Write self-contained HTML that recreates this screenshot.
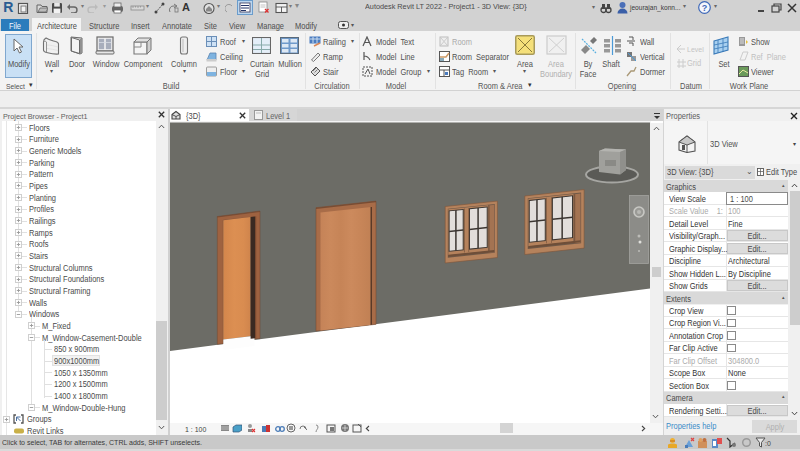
<!DOCTYPE html><html><head><meta charset="utf-8"><style>*{margin:0;padding:0;box-sizing:border-box}
html,body{width:800px;height:451px;overflow:hidden;background:#f0f0f0;position:relative;font-family:"Liberation Sans",sans-serif}
.t{position:absolute;white-space:nowrap;line-height:12px}
.b{position:absolute}
</style></head><body><div id="w" style="position:absolute;left:0;top:0;width:800px;height:451px;overflow:hidden">
<div class="b" style="left:0px;top:0px;width:800px;height:31px;background:#d2d2d2;"></div>
<div style="position:absolute;left:0;top:-1.5px;width:800px;height:18px">
<div class="t" style="left:3.2px;top:2.20px;font-size:14px;color:#2a5c92;font-weight:bold;">R</div>
<svg class="b" style="left:17px;top:3px;" width="12" height="12" viewBox="0 0 12 12"><rect x="1.5" y="1.5" width="9" height="10" fill="#f4f4f4" stroke="#555" stroke-width="1.2"/><rect x="4" y="4" width="5" height="6" fill="none" stroke="#777"/></svg>
<svg class="b" style="left:36px;top:4px;" width="12" height="10" viewBox="0 0 12 10"><path d="M1 2h4l1 1.5h5v6H1z" fill="#d9d9d9" stroke="#666"/><path d="M2 9l2-4h8l-2 4z" fill="#bbb" stroke="#666" stroke-width=".8"/></svg>
<svg class="b" style="left:51px;top:3px;" width="12" height="12" viewBox="0 0 12 12"><rect x="1" y="1" width="10" height="10" rx="1.2" fill="#4a4a4a"/><rect x="3.2" y="1" width="5.6" height="3.6" fill="#e8e8e8"/><rect x="2.6" y="6.6" width="6.8" height="4.4" fill="#f2f2f2"/></svg>
<svg class="b" style="left:66px;top:4px;" width="12" height="10" viewBox="0 0 12 10"><path d="M3 4h5a3 3 0 0 1 0 6H5" fill="none" stroke="#666" stroke-width="1.4"/><path d="M1 4l3-3v6z" fill="#666"/></svg>
<div class="t" style="left:81px;top:1.50px;font-size:6px;color:#777;">▾</div>
<svg class="b" style="left:87px;top:4px;" width="12" height="10" viewBox="0 0 12 10"><path d="M9 4H4a3 3 0 0 0 0 6h3" fill="none" stroke="#bbb" stroke-width="1.4"/><path d="M11 4L8 1v6z" fill="#bbb"/></svg>
<div class="t" style="left:103px;top:1.50px;font-size:6px;color:#999;">▾</div>
<svg class="b" style="left:111px;top:3px;" width="13" height="12" viewBox="0 0 13 12"><rect x="1" y="4" width="11" height="6" rx="2" fill="#666"/><rect x="3" y="1" width="7" height="4" fill="#eee" stroke="#666" stroke-width=".8"/><rect x="3" y="8" width="7" height="3" fill="#fff" stroke="#666" stroke-width=".8"/></svg>
<svg class="b" style="left:130px;top:4px;" width="16" height="10" viewBox="0 0 16 10"><rect x="1" y="3" width="13" height="4" fill="#d8d8d8" stroke="#8a8a8a" stroke-width=".8"/><path d="M3 3v2M5.5 3v1.5M8 3v2M10.5 3v1.5" stroke="#8a8a8a" stroke-width=".7"/></svg>
<div class="t" style="left:146px;top:1.50px;font-size:6px;color:#777;">▾</div>
<svg class="b" style="left:154px;top:3px;" width="11" height="12" viewBox="0 0 11 12"><path d="M2.5 9.5L8.5 2.5" stroke="#555" stroke-width="1" stroke-dasharray="1.5 .8"/><circle cx="2" cy="10" r="1.5" fill="#444"/><circle cx="9" cy="2" r="1.5" fill="#444"/></svg>
<svg class="b" style="left:168px;top:3px;" width="12" height="12" viewBox="0 0 12 12"><path d="M2 10a4 4 0 0 1 4-6h2M6 2l3 2-3 2" fill="none" stroke="#777" stroke-width="1"/><rect x="7" y="6" width="3" height="4" fill="none" stroke="#777" stroke-width=".8"/></svg>
<div class="t" style="left:182px;top:2.50px;font-size:11px;color:#333;font-weight:bold;">A</div>
<svg class="b" style="left:203px;top:3px;" width="12" height="12" viewBox="0 0 12 12"><circle cx="6" cy="6.5" r="5" fill="#e0e0e0" stroke="#555" stroke-width="1.1"/><path d="M3 7l3-3 3 3v2.5H3z" fill="#888"/></svg>
<div class="t" style="left:217px;top:1.50px;font-size:6px;color:#777;">▾</div>
<svg class="b" style="left:225px;top:3px;" width="9" height="12" viewBox="0 0 9 12"><path d="M2 10a4 4 0 1 1 5-6" fill="none" stroke="#999" stroke-width="1"/></svg>
<svg class="b" style="left:237px;top:1px;" width="16" height="15" viewBox="0 0 16 15"><rect x=".5" y=".5" width="15" height="14" fill="#bcd6ee" stroke="#6a9ccc"/><rect x="3" y="3" width="10" height="9" fill="#fff" stroke="#335" stroke-width=".8"/><path d="M4 5.5h8M4 8h8M4 10.5h5" stroke="#236" stroke-width="1"/></svg>
<svg class="b" style="left:258px;top:2px;" width="12" height="13" viewBox="0 0 12 13"><rect x="1" y="1" width="8" height="10" fill="#fff" stroke="#888" stroke-width=".8"/><path d="M2.5 4h5M2.5 6h5" stroke="#aaa" stroke-width=".7"/><path d="M7 8l3.5 3.5M10.5 8L7 11.5" stroke="#d33" stroke-width="1.3"/></svg>
<svg class="b" style="left:275px;top:3px;" width="13" height="12" viewBox="0 0 13 12"><rect x="1" y="1.5" width="11" height="9" fill="#f4f4f4" stroke="#555" stroke-width="1.1"/><path d="M1 5h11M6.5 5v5.5" stroke="#555" stroke-width=".9"/></svg>
<div class="t" style="left:289px;top:1.50px;font-size:6px;color:#777;">▾</div>
<div class="t" style="left:295px;top:1.50px;font-size:7.5px;color:#888;">▾</div>
</div>
<div class="t" style="left:365px;top:0.60px;font-size:7.96px;transform:scaleX(0.915);transform-origin:0 50%;color:#4a4a4a;">Autodesk Revit LT 2022 - Project1 - 3D View: {3D}</div>
<div style="position:absolute;left:0;top:-1px;width:800px;height:18px">
<div class="t" style="left:592px;top:1.50px;font-size:6px;color:#666;">▾</div>
<svg class="b" style="left:600px;top:3px;" width="12" height="12" viewBox="0 0 12 12"><circle cx="3.5" cy="8" r="2.5" fill="none" stroke="#444" stroke-width="1.3"/><circle cx="8.5" cy="8" r="2.5" fill="none" stroke="#444" stroke-width="1.3"/><rect x="2" y="2" width="3" height="5" fill="#444"/><rect x="7" y="2" width="3" height="5" fill="#444"/></svg>
<svg class="b" style="left:617px;top:2px;" width="11" height="13" viewBox="0 0 11 13"><circle cx="5.5" cy="4" r="3" fill="#4a6fb8"/><path d="M0.5 12.5a5 5 0 0 1 10 0z" fill="#3a5fa8"/></svg>
<div class="t" style="left:629.5px;top:3.30px;font-size:7.19px;transform:scaleX(0.915);transform-origin:0 50%;color:#3a3a3a;">jeourajan_konn...</div>
<div class="t" style="left:683px;top:1.00px;font-size:6px;color:#666;">▾</div>
<svg class="b" style="left:698px;top:2px;" width="13" height="13" viewBox="0 0 13 13"><circle cx="6.5" cy="6.5" r="5.8" fill="#f4f6fb" stroke="#3e68b8" stroke-width="1.2"/><text x="6.5" y="10" font-size="9" text-anchor="middle" fill="#3e68b8" font-family="Liberation Sans" font-weight="bold">?</text></svg>
<div class="t" style="left:714px;top:1.00px;font-size:6px;color:#666;">▾</div>
<div class="b" style="left:758px;top:11px;width:6px;height:1.5px;background:#444;"></div>
<svg class="b" style="left:771px;top:4px;" width="11" height="10" viewBox="0 0 11 10"><rect x="1" y="3" width="7" height="6" fill="none" stroke="#444" stroke-width="1.2"/><path d="M3 3V1h7v6H8" fill="none" stroke="#444" stroke-width="1.2"/></svg>
<svg class="b" style="left:787px;top:4px;" width="10" height="10" viewBox="0 0 10 10"><path d="M1 1l8 8M9 1l-8 8" stroke="#333" stroke-width="1.5"/></svg>
</div>
<div class="b" style="left:1px;top:18.5px;width:28px;height:12.5px;background:#2b7cbc;"></div>
<div class="t" style="left:-45px;width:120px;text-align:center;top:20.60px;font-size:8.18px;transform:scaleX(0.915);color:#f4f8fc;">File</div>
<div class="b" style="left:32px;top:17.5px;width:49px;height:13.5px;background:#f3f3f3;"></div>
<div class="t" style="left:37px;top:20.60px;font-size:8.18px;transform:scaleX(0.915);transform-origin:0 50%;color:#4a4a4a;">Architecture</div>
<div class="t" style="left:89px;top:20.60px;font-size:8.18px;transform:scaleX(0.915);transform-origin:0 50%;color:#4e4e4e;">Structure</div>
<div class="t" style="left:131px;top:20.60px;font-size:8.18px;transform:scaleX(0.915);transform-origin:0 50%;color:#4e4e4e;">Insert</div>
<div class="t" style="left:162px;top:20.60px;font-size:8.18px;transform:scaleX(0.915);transform-origin:0 50%;color:#4e4e4e;">Annotate</div>
<div class="t" style="left:204px;top:20.60px;font-size:8.18px;transform:scaleX(0.915);transform-origin:0 50%;color:#4e4e4e;">Site</div>
<div class="t" style="left:229px;top:20.60px;font-size:8.18px;transform:scaleX(0.915);transform-origin:0 50%;color:#4e4e4e;">View</div>
<div class="t" style="left:257px;top:20.60px;font-size:8.18px;transform:scaleX(0.915);transform-origin:0 50%;color:#4e4e4e;">Manage</div>
<div class="t" style="left:295px;top:20.60px;font-size:8.18px;transform:scaleX(0.915);transform-origin:0 50%;color:#4e4e4e;">Modify</div>
<svg class="b" style="left:338px;top:21px;" width="11" height="8" viewBox="0 0 11 8"><rect x=".5" y=".5" width="10" height="7" rx="2" fill="#eee" stroke="#555"/><circle cx="5.5" cy="4" r="1.5" fill="#333"/></svg>
<div class="t" style="left:351px;top:19.00px;font-size:6px;color:#555;">▾</div>
<div class="b" style="left:0px;top:31px;width:800px;height:59px;background:#f3f3f3;"></div>
<div class="b" style="left:0px;top:90px;width:800px;height:1px;background:#d2d2d2;"></div>
<div class="b" style="left:0px;top:91px;width:800px;height:16px;background:#efefef;"></div>
<div class="b" style="left:0px;top:107px;width:800px;height:1.5px;background:#d6d6d6;"></div>
<div class="b" style="left:36px;top:33px;width:1px;height:56px;background:#e2e2e2;"></div>
<div class="b" style="left:305px;top:33px;width:1px;height:56px;background:#e2e2e2;"></div>
<div class="b" style="left:359px;top:33px;width:1px;height:56px;background:#e2e2e2;"></div>
<div class="b" style="left:435px;top:33px;width:1px;height:56px;background:#e2e2e2;"></div>
<div class="b" style="left:575px;top:33px;width:1px;height:56px;background:#e2e2e2;"></div>
<div class="b" style="left:670px;top:33px;width:1px;height:56px;background:#e2e2e2;"></div>
<div class="b" style="left:709px;top:33px;width:1px;height:56px;background:#e2e2e2;"></div>
<div class="b" style="left:5px;top:34px;width:27px;height:44px;background:#c9e0f5;border:1px solid #7fa7cf;"></div>
<svg class="b" style="left:12px;top:38px;" width="12" height="16" viewBox="0 0 12 16"><path d="M2 1v12l3-3 2.5 5 2-1-2.5-5h4z" fill="#fff" stroke="#666" stroke-width="1"/></svg>
<div class="t" style="left:-41.5px;width:120px;text-align:center;top:58.80px;font-size:8.18px;transform:scaleX(0.915);color:#505050;">Modify</div>
<div class="t" style="left:5.5px;top:80.60px;font-size:7.41px;transform:scaleX(0.915);transform-origin:0 50%;color:#505050;">Select</div>
<div class="t" style="left:29px;top:79.00px;font-size:7px;color:#333;">▾</div>
<svg class="b" style="left:42px;top:36px;" width="19" height="19" viewBox="0 0 19 19"><path d="M4 2c-2 1-2.5 2-2.5 4v8c0 1.5 1 2 3 2.5 4 1 8 2 12 1.5V8c0-1.5-1-2-3-2.5C10 4.5 7 4 4 2z" fill="#f0f0f0" stroke="#707070" stroke-width="1.1"/><path d="M1.5 6c1-1 2-1 3 0v10.5" fill="none" stroke="#888" stroke-width=".9"/><path d="M5 9c4 0 7 1 11 2M5 12.5c4 .5 7 1 11 2" stroke="#ddd" stroke-width=".8" fill="none"/></svg>
<div class="t" style="left:-8.5px;width:120px;text-align:center;top:58.80px;font-size:8.18px;transform:scaleX(0.915);color:#505050;">Wall</div>
<div class="t" style="left:49.5px;top:65.00px;font-size:6px;color:#555;">▾</div>
<svg class="b" style="left:69px;top:35px;" width="15" height="20" viewBox="0 0 15 20"><path d="M2 2l11 1v15l-2 1-9-3z" fill="#d8d8d8" stroke="#6a6a6a" stroke-width="1"/><path d="M2.5 2.5l8 2.5v13.5l-8-2.5z" fill="#f4f4f4" stroke="#6a6a6a" stroke-width="1"/><path d="M11 4h2v14h-2z" fill="#909090"/></svg>
<div class="t" style="left:17px;width:120px;text-align:center;top:58.80px;font-size:8.18px;transform:scaleX(0.915);color:#505050;">Door</div>
<svg class="b" style="left:95px;top:36px;" width="20" height="19" viewBox="0 0 20 19"><rect x="2" y="1" width="16" height="14" fill="#f0f0f0" stroke="#6a6a6a" stroke-width="1.2"/><rect x="3.8" y="2.8" width="5.4" height="10.4" fill="#a8aebc"/><rect x="10.8" y="2.8" width="5.4" height="10.4" fill="#a8aebc"/><path d="M3.8 6.5h12.4" stroke="#d8dce4" stroke-width=".8"/><rect x="1" y="15" width="18" height="3" rx="1" fill="#e8e8e8" stroke="#6a6a6a" stroke-width="1"/></svg>
<div class="t" style="left:45.5px;width:120px;text-align:center;top:58.80px;font-size:8.18px;transform:scaleX(0.915);color:#505050;">Window</div>
<svg class="b" style="left:132px;top:36px;" width="21" height="19" viewBox="0 0 21 19"><path d="M2 6h13v12H2z" fill="#f4f4f4" stroke="#777" stroke-width="1.1"/><path d="M2 6l4-4h13l-4 4z" fill="#e0e0e0" stroke="#777" stroke-width="1"/><path d="M15 6l4-4v12l-4 4z" fill="#cfcfcf" stroke="#777" stroke-width="1"/><path d="M2 11h7V6" fill="none" stroke="#888"/></svg>
<div class="t" style="left:83px;width:120px;text-align:center;top:58.80px;font-size:8.18px;transform:scaleX(0.915);color:#505050;">Component</div>
<svg class="b" style="left:179px;top:36px;" width="10" height="19" viewBox="0 0 10 19"><rect x="1.5" y="1" width="7" height="17" rx="2" fill="#eee" stroke="#777" stroke-width="1.1"/><path d="M4 3v13" stroke="#bbb"/></svg>
<div class="t" style="left:124px;width:120px;text-align:center;top:58.80px;font-size:8.18px;transform:scaleX(0.915);color:#505050;">Column</div>
<div class="t" style="left:182.5px;top:65.00px;font-size:6px;color:#555;">▾</div>
<div class="t" style="left:111px;width:120px;text-align:center;top:80.80px;font-size:8.18px;transform:scaleX(0.915);color:#555;">Build</div>
<svg class="b" style="left:206px;top:36px;" width="11" height="11" viewBox="0 0 11 11"><rect x=".5" y=".5" width="10" height="10" fill="#cfe2f5" stroke="#6b8fb8"/><path d="M5.5 1v9M1 5.5h9" stroke="#6b8fb8"/></svg>
<div class="t" style="left:220px;top:37.10px;font-size:8.18px;transform:scaleX(0.915);transform-origin:0 50%;color:#505050;">Roof</div>
<div class="t" style="left:241.5px;top:35.00px;font-size:6px;color:#555;">▾</div>
<svg class="b" style="left:206px;top:51px;" width="11" height="11" viewBox="0 0 11 11"><path d="M1 9l3-7h6v7z" fill="#7eb3e0" stroke="#5a84b0" stroke-width=".8"/><rect x=".5" y="8" width="10" height="2.5" fill="#ccc"/></svg>
<div class="t" style="left:220px;top:51.90px;font-size:8.18px;transform:scaleX(0.915);transform-origin:0 50%;color:#505050;">Ceiling</div>
<svg class="b" style="left:206px;top:66px;" width="11" height="11" viewBox="0 0 11 11"><rect x=".5" y="1" width="10" height="9" rx="1" fill="#eee" stroke="#888" stroke-width=".8"/><path d="M1 6h9v4H1z" fill="#7eb3e0"/></svg>
<div class="t" style="left:220px;top:67.10px;font-size:8.18px;transform:scaleX(0.915);transform-origin:0 50%;color:#505050;">Floor</div>
<div class="t" style="left:241.5px;top:65.00px;font-size:6px;color:#555;">▾</div>
<svg class="b" style="left:252px;top:37px;" width="19" height="17" viewBox="0 0 19 17"><rect x=".5" y=".5" width="18" height="16" fill="#e4eef8" stroke="#666" stroke-width="1.1"/><path d="M9.5 1v15M1 8h17M1 12.5h17" stroke="#8aa"/></svg>
<div class="t" style="left:201.5px;width:120px;text-align:center;top:58.80px;font-size:8.18px;transform:scaleX(0.915);color:#505050;">Curtain</div>
<div class="t" style="left:201.5px;width:120px;text-align:center;top:68.80px;font-size:8.18px;transform:scaleX(0.915);color:#505050;">Grid</div>
<svg class="b" style="left:280px;top:37px;" width="19" height="17" viewBox="0 0 19 17"><rect x=".5" y=".5" width="18" height="16" fill="#6f9acb" stroke="#5a6a7a" stroke-width="1.1"/><rect x="2" y="2" width="6.5" height="3.5" fill="#dde8f4"/><rect x="10.5" y="2" width="6.5" height="3.5" fill="#dde8f4"/><rect x="2" y="7" width="6.5" height="3.5" fill="#dde8f4"/><rect x="10.5" y="7" width="6.5" height="3.5" fill="#dde8f4"/><rect x="2" y="12" width="6.5" height="3.5" fill="#dde8f4"/><rect x="10.5" y="12" width="6.5" height="3.5" fill="#dde8f4"/></svg>
<div class="t" style="left:230px;width:120px;text-align:center;top:58.80px;font-size:8.18px;transform:scaleX(0.915);color:#505050;">Mullion</div>
<svg class="b" style="left:309px;top:36px;" width="12" height="11" viewBox="0 0 12 11"><rect x=".5" y=".5" width="11" height="7" fill="#4a7cc0"/><path d="M1 3h10M4 1v6M8 1v6" stroke="#cde"/><path d="M5 10l6-3" stroke="#d85" stroke-width="1.5"/></svg>
<div class="t" style="left:323px;top:37.10px;font-size:8.18px;transform:scaleX(0.915);transform-origin:0 50%;color:#505050;">Railing</div>
<div class="t" style="left:351px;top:35.00px;font-size:6px;color:#555;">▾</div>
<svg class="b" style="left:310px;top:51px;" width="11" height="11" viewBox="0 0 11 11"><path d="M1.5 9L8 2l2 2-6.5 6.5z" fill="#eee" stroke="#777" stroke-width="1"/></svg>
<div class="t" style="left:323px;top:51.90px;font-size:8.18px;transform:scaleX(0.915);transform-origin:0 50%;color:#505050;">Ramp</div>
<svg class="b" style="left:310px;top:66px;" width="11" height="11" viewBox="0 0 11 11"><path d="M1 6l5-5 4 4-5 5z" fill="#ddd" stroke="#555" stroke-width="1"/><path d="M3 5l3-3M4.5 6.5l3-3" stroke="#555" stroke-width=".7"/></svg>
<div class="t" style="left:323px;top:67.10px;font-size:8.18px;transform:scaleX(0.915);transform-origin:0 50%;color:#505050;">Stair</div>
<div class="t" style="left:272px;width:120px;text-align:center;top:80.80px;font-size:8.18px;transform:scaleX(0.915);color:#555;">Circulation</div>
<svg class="b" style="left:362px;top:36px;" width="10" height="11" viewBox="0 0 10 11"><path d="M1 10L5 1l4 9M3 6.5h4" fill="none" stroke="#555" stroke-width="1.2"/></svg>
<div class="t" style="left:376px;top:37.10px;font-size:8.18px;transform:scaleX(0.915);transform-origin:0 50%;color:#505050;">Model&nbsp; Text</div>
<svg class="b" style="left:362px;top:51px;" width="10" height="11" viewBox="0 0 10 11"><path d="M2 1v8M2 5c3 0 5 2 6 4" fill="none" stroke="#555" stroke-width="1.2"/></svg>
<div class="t" style="left:376px;top:51.90px;font-size:8.18px;transform:scaleX(0.915);transform-origin:0 50%;color:#505050;">Model&nbsp; Line</div>
<svg class="b" style="left:362px;top:66px;" width="11" height="11" viewBox="0 0 11 11"><rect x="1" y="1" width="9" height="9" fill="none" stroke="#555" stroke-width="1" stroke-dasharray="2 1"/><path d="M3 8l3-5 2 5" fill="none" stroke="#555"/></svg>
<div class="t" style="left:376px;top:67.10px;font-size:8.18px;transform:scaleX(0.915);transform-origin:0 50%;color:#505050;">Model&nbsp; Group</div>
<div class="t" style="left:427px;top:65.00px;font-size:6px;color:#555;">▾</div>
<div class="t" style="left:336px;width:120px;text-align:center;top:80.80px;font-size:8.18px;transform:scaleX(0.915);color:#555;">Model</div>
<svg class="b" style="left:439px;top:36px;" width="10" height="11" viewBox="0 0 10 11"><rect x="1" y="1" width="8" height="9" fill="#eee" stroke="#bbb"/><path d="M2 2l6 7M8 2l-6 7" stroke="#ccc"/></svg>
<div class="t" style="left:452px;top:37.10px;font-size:8.18px;transform:scaleX(0.915);transform-origin:0 50%;color:#aaa;">Room</div>
<svg class="b" style="left:439px;top:51px;" width="11" height="11" viewBox="0 0 11 11"><rect x=".5" y=".5" width="10" height="10" fill="#fff" stroke="#555" stroke-width="1"/><path d="M1 6h6l3-4" stroke="#c96" stroke-width="1.5" fill="none"/><rect x="1" y="7" width="4" height="3" fill="#8ab"/></svg>
<div class="t" style="left:452px;top:51.90px;font-size:8.18px;transform:scaleX(0.915);transform-origin:0 50%;color:#505050;">Room&nbsp; Separator</div>
<svg class="b" style="left:439px;top:66px;" width="11" height="11" viewBox="0 0 11 11"><rect x=".5" y=".5" width="10" height="10" fill="#fff" stroke="#555" stroke-width="1"/><path d="M1 4h9M5 4v6" stroke="#555"/><rect x="6" y="6" width="3" height="3" fill="#4a7cc0"/></svg>
<div class="t" style="left:452px;top:67.10px;font-size:8.18px;transform:scaleX(0.915);transform-origin:0 50%;color:#505050;">Tag&nbsp; Room</div>
<div class="t" style="left:493px;top:65.00px;font-size:6px;color:#555;">▾</div>
<svg class="b" style="left:515px;top:35px;" width="20" height="20" viewBox="0 0 20 20"><rect x=".75" y=".75" width="18.5" height="18.5" rx="1.5" fill="#f5e07a" stroke="#a89a5a" stroke-width="1.5"/><path d="M3 3l14 14M17 3L3 17" stroke="#8a7a3a" stroke-width="1"/></svg>
<div class="t" style="left:465px;width:120px;text-align:center;top:59.30px;font-size:8.18px;transform:scaleX(0.915);color:#505050;">Area</div>
<div class="t" style="left:523px;top:64.50px;font-size:6px;color:#555;">▾</div>
<svg class="b" style="left:546px;top:35px;" width="21" height="20" viewBox="0 0 21 20"><rect x="1" y="1" width="19" height="18" fill="#f0f0f0" stroke="#ccc" stroke-width="1.2"/><path d="M3 3l15 14M18 3L3 17" stroke="#d0d0d0"/></svg>
<div class="t" style="left:496px;width:120px;text-align:center;top:59.30px;font-size:8.18px;transform:scaleX(0.915);color:#b0b0b0;">Area</div>
<div class="t" style="left:496px;width:120px;text-align:center;top:68.80px;font-size:8.18px;transform:scaleX(0.915);color:#b0b0b0;">Boundary</div>
<div class="t" style="left:478px;top:80.80px;font-size:8.18px;transform:scaleX(0.915);transform-origin:0 50%;color:#555;">Room &amp; Area</div>
<div class="t" style="left:528px;top:79.00px;font-size:7px;color:#333;">▾</div>
<svg class="b" style="left:579px;top:36px;" width="19" height="19" viewBox="0 0 19 19"><path d="M2 14l5-5 4 4-5 5z" fill="#888"/><path d="M11 5l4-4 3 3-4 4z" fill="#777"/><path d="M3 3l14 14" stroke="#5ab0e0" stroke-width="1.2" stroke-dasharray="2 1"/></svg>
<div class="t" style="left:528px;width:120px;text-align:center;top:59.30px;font-size:8.18px;transform:scaleX(0.915);color:#505050;">By</div>
<div class="t" style="left:528px;width:120px;text-align:center;top:68.80px;font-size:8.18px;transform:scaleX(0.915);color:#505050;">Face</div>
<svg class="b" style="left:603px;top:36px;" width="19" height="19" viewBox="0 0 19 19"><rect x="1" y="3" width="6" height="3.5" fill="#999"/><rect x="1" y="8" width="6" height="3.5" fill="#999"/><rect x="1" y="13" width="6" height="3.5" fill="#999"/><rect x="12" y="3" width="6" height="3.5" fill="#999"/><rect x="12" y="8" width="6" height="3.5" fill="#999"/><rect x="12" y="13" width="6" height="3.5" fill="#999"/><path d="M9.5 0v19" stroke="#4a9ad8" stroke-width="1.2"/></svg>
<div class="t" style="left:551px;width:120px;text-align:center;top:59.30px;font-size:8.18px;transform:scaleX(0.915);color:#505050;">Shaft</div>
<svg class="b" style="left:626px;top:36px;" width="10" height="11" viewBox="0 0 10 11"><path d="M1 5h8M3 1h4v3M3 7h4v3" fill="none" stroke="#555" stroke-width="1"/></svg>
<div class="t" style="left:640px;top:37.10px;font-size:8.18px;transform:scaleX(0.915);transform-origin:0 50%;color:#505050;">Wall</div>
<svg class="b" style="left:626px;top:51px;" width="11" height="11" viewBox="0 0 11 11"><rect x="1" y="1" width="5" height="5" fill="#777"/><rect x="5" y="5" width="5" height="5" fill="#999"/><path d="M2 2l8 8" stroke="#4a9ad8"/></svg>
<div class="t" style="left:640px;top:51.90px;font-size:8.18px;transform:scaleX(0.915);transform-origin:0 50%;color:#505050;">Vertical</div>
<svg class="b" style="left:626px;top:66px;" width="11" height="11" viewBox="0 0 11 11"><path d="M1 10l4-5h3l2-4" fill="none" stroke="#a97" stroke-width="1.3"/></svg>
<div class="t" style="left:640px;top:67.10px;font-size:8.18px;transform:scaleX(0.915);transform-origin:0 50%;color:#505050;">Dormer</div>
<div class="t" style="left:562px;width:120px;text-align:center;top:80.80px;font-size:8.18px;transform:scaleX(0.915);color:#555;">Opening</div>
<svg class="b" style="left:676px;top:44px;" width="10" height="9" viewBox="0 0 10 9"><path d="M1 5h8M5 1l-4 4 4 4" fill="none" stroke="#ccc"/></svg>
<div class="t" style="left:687px;top:44.30px;font-size:7.63px;transform:scaleX(0.915);transform-origin:0 50%;color:#c4c4c4;">Level</div>
<svg class="b" style="left:676px;top:58px;" width="10" height="10" viewBox="0 0 10 10"><path d="M3 1v9M7 1v9M1 4h9M1 8h9" stroke="#ccc"/></svg>
<div class="t" style="left:687px;top:58.30px;font-size:8.18px;transform:scaleX(0.915);transform-origin:0 50%;color:#c4c4c4;">Grid</div>
<div class="t" style="left:631px;width:120px;text-align:center;top:80.80px;font-size:8.18px;transform:scaleX(0.915);color:#555;">Datum</div>
<svg class="b" style="left:713px;top:36px;" width="19" height="19" viewBox="0 0 19 19"><path d="M1 5l14-4v13L1 18z" fill="#a8d0f0" stroke="#3a7ab8" stroke-width="1.1"/><path d="M5 4v13M10 3v13M1 9l14-3M1 13l14-3" stroke="#3a7ab8" stroke-width=".8"/></svg>
<div class="t" style="left:663.5px;width:120px;text-align:center;top:59.30px;font-size:8.18px;transform:scaleX(0.915);color:#505050;">Set</div>
<svg class="b" style="left:738px;top:36px;" width="11" height="11" viewBox="0 0 11 11"><rect x="1" y="1" width="6" height="9" fill="#999"/><path d="M2 3h4M2 5h4M2 7h4" stroke="#ddd"/><path d="M8 4l2 2-2 2" fill="#e8c040"/></svg>
<div class="t" style="left:751px;top:37.10px;font-size:8.18px;transform:scaleX(0.915);transform-origin:0 50%;color:#505050;">Show</div>
<svg class="b" style="left:738px;top:51px;" width="11" height="11" viewBox="0 0 11 11"><path d="M2 9l3-8h5l-3 8z" fill="none" stroke="#ccc"/></svg>
<div class="t" style="left:751px;top:51.90px;font-size:8.18px;transform:scaleX(0.915);transform-origin:0 50%;color:#c0c0c0;">Ref&nbsp; Plane</div>
<svg class="b" style="left:738px;top:66px;" width="11" height="11" viewBox="0 0 11 11"><rect x=".5" y=".5" width="10" height="10" fill="#6a9a5a" stroke="#555"/><path d="M1 8l4-4 5 3" stroke="#e8e8a0" fill="none"/></svg>
<div class="t" style="left:751px;top:67.10px;font-size:8.18px;transform:scaleX(0.915);transform-origin:0 50%;color:#505050;">Viewer</div>
<div class="t" style="left:689px;width:120px;text-align:center;top:80.80px;font-size:8.18px;transform:scaleX(0.915);color:#555;">Work Plane</div>
<div class="b" style="left:0px;top:108.5px;width:169px;height:12px;background:#f0f0f0;"></div>
<div class="t" style="left:2.5px;top:111.10px;font-size:7.96px;transform:scaleX(0.915);transform-origin:0 50%;color:#606060;">Project Browser - Project1</div>
<svg class="b" style="left:158px;top:111px;" width="7" height="7" viewBox="0 0 7 7"><path d="M.8 .8l5.4 5.4M6.2 .8L.8 6.2" stroke="#333" stroke-width="1.3"/></svg>
<div class="b" style="left:1.5px;top:120.5px;width:155px;height:314px;background:#fff;"></div>
<div class="b" style="left:156px;top:120.5px;width:12px;height:314px;background:#f0f0f0;"></div>
<div class="b" style="left:156px;top:320.5px;width:10.5px;height:99px;background:#cdcdcd;"></div>
<svg class="b" style="left:158px;top:124px;" width="7" height="5" viewBox="0 0 7 5"><path d="M.8 4L3.5 1.2 6.2 4" fill="none" stroke="#555" stroke-width="1"/></svg>
<svg class="b" style="left:158px;top:425px;" width="7" height="5" viewBox="0 0 7 5"><path d="M.8 1L3.5 3.8 6.2 1" fill="none" stroke="#555" stroke-width="1"/></svg>
<div class="b" style="left:168px;top:108.5px;width:1.5px;height:326px;background:#d0d0d0;"></div>
<div class="b" style="left:6px;top:120.5px;width:1px;height:314px;background:#e6e6e6;"></div>
<div class="b" style="left:18px;top:120.5px;width:1px;height:194px;background:#e0e0e0;"></div>
<div class="b" style="left:21px;top:127.4px;width:6px;height:1px;background:#e0e0e0;"></div>
<svg class="b" style="left:15px;top:123.9px;" width="7" height="7" viewBox="0 0 7 7"><rect x=".5" y=".5" width="6" height="6" fill="#fff" stroke="#cfcfcf" stroke-width="1"/><path d="M1.8 3.5h3.4" stroke="#999" stroke-width=".9"/><path d="M3.5 1.8v3.4" stroke="#999" stroke-width=".9"/></svg>
<div class="t" style="left:29px;top:122.70px;font-size:8.18px;transform:scaleX(0.915);transform-origin:0 50%;color:#4a4a4a;">Floors</div>
<div class="b" style="left:21px;top:139.065px;width:6px;height:1px;background:#e0e0e0;"></div>
<svg class="b" style="left:15px;top:135.565px;" width="7" height="7" viewBox="0 0 7 7"><rect x=".5" y=".5" width="6" height="6" fill="#fff" stroke="#cfcfcf" stroke-width="1"/><path d="M1.8 3.5h3.4" stroke="#999" stroke-width=".9"/><path d="M3.5 1.8v3.4" stroke="#999" stroke-width=".9"/></svg>
<div class="t" style="left:29px;top:134.37px;font-size:8.18px;transform:scaleX(0.915);transform-origin:0 50%;color:#4a4a4a;">Furniture</div>
<div class="b" style="left:21px;top:150.73000000000002px;width:6px;height:1px;background:#e0e0e0;"></div>
<svg class="b" style="left:15px;top:147.23000000000002px;" width="7" height="7" viewBox="0 0 7 7"><rect x=".5" y=".5" width="6" height="6" fill="#fff" stroke="#cfcfcf" stroke-width="1"/><path d="M1.8 3.5h3.4" stroke="#999" stroke-width=".9"/><path d="M3.5 1.8v3.4" stroke="#999" stroke-width=".9"/></svg>
<div class="t" style="left:29px;top:146.03px;font-size:8.18px;transform:scaleX(0.915);transform-origin:0 50%;color:#4a4a4a;">Generic Models</div>
<div class="b" style="left:21px;top:162.395px;width:6px;height:1px;background:#e0e0e0;"></div>
<svg class="b" style="left:15px;top:158.895px;" width="7" height="7" viewBox="0 0 7 7"><rect x=".5" y=".5" width="6" height="6" fill="#fff" stroke="#cfcfcf" stroke-width="1"/><path d="M1.8 3.5h3.4" stroke="#999" stroke-width=".9"/><path d="M3.5 1.8v3.4" stroke="#999" stroke-width=".9"/></svg>
<div class="t" style="left:29px;top:157.70px;font-size:8.18px;transform:scaleX(0.915);transform-origin:0 50%;color:#4a4a4a;">Parking</div>
<div class="b" style="left:21px;top:174.06px;width:6px;height:1px;background:#e0e0e0;"></div>
<svg class="b" style="left:15px;top:170.56px;" width="7" height="7" viewBox="0 0 7 7"><rect x=".5" y=".5" width="6" height="6" fill="#fff" stroke="#cfcfcf" stroke-width="1"/><path d="M1.8 3.5h3.4" stroke="#999" stroke-width=".9"/><path d="M3.5 1.8v3.4" stroke="#999" stroke-width=".9"/></svg>
<div class="t" style="left:29px;top:169.36px;font-size:8.18px;transform:scaleX(0.915);transform-origin:0 50%;color:#4a4a4a;">Pattern</div>
<div class="b" style="left:21px;top:185.725px;width:6px;height:1px;background:#e0e0e0;"></div>
<svg class="b" style="left:15px;top:182.225px;" width="7" height="7" viewBox="0 0 7 7"><rect x=".5" y=".5" width="6" height="6" fill="#fff" stroke="#cfcfcf" stroke-width="1"/><path d="M1.8 3.5h3.4" stroke="#999" stroke-width=".9"/><path d="M3.5 1.8v3.4" stroke="#999" stroke-width=".9"/></svg>
<div class="t" style="left:29px;top:181.03px;font-size:8.18px;transform:scaleX(0.915);transform-origin:0 50%;color:#4a4a4a;">Pipes</div>
<div class="b" style="left:21px;top:197.39px;width:6px;height:1px;background:#e0e0e0;"></div>
<svg class="b" style="left:15px;top:193.89px;" width="7" height="7" viewBox="0 0 7 7"><rect x=".5" y=".5" width="6" height="6" fill="#fff" stroke="#cfcfcf" stroke-width="1"/><path d="M1.8 3.5h3.4" stroke="#999" stroke-width=".9"/><path d="M3.5 1.8v3.4" stroke="#999" stroke-width=".9"/></svg>
<div class="t" style="left:29px;top:192.69px;font-size:8.18px;transform:scaleX(0.915);transform-origin:0 50%;color:#4a4a4a;">Planting</div>
<div class="b" style="left:21px;top:209.055px;width:6px;height:1px;background:#e0e0e0;"></div>
<svg class="b" style="left:15px;top:205.555px;" width="7" height="7" viewBox="0 0 7 7"><rect x=".5" y=".5" width="6" height="6" fill="#fff" stroke="#cfcfcf" stroke-width="1"/><path d="M1.8 3.5h3.4" stroke="#999" stroke-width=".9"/><path d="M3.5 1.8v3.4" stroke="#999" stroke-width=".9"/></svg>
<div class="t" style="left:29px;top:204.36px;font-size:8.18px;transform:scaleX(0.915);transform-origin:0 50%;color:#4a4a4a;">Profiles</div>
<div class="b" style="left:21px;top:220.72px;width:6px;height:1px;background:#e0e0e0;"></div>
<svg class="b" style="left:15px;top:217.22px;" width="7" height="7" viewBox="0 0 7 7"><rect x=".5" y=".5" width="6" height="6" fill="#fff" stroke="#cfcfcf" stroke-width="1"/><path d="M1.8 3.5h3.4" stroke="#999" stroke-width=".9"/><path d="M3.5 1.8v3.4" stroke="#999" stroke-width=".9"/></svg>
<div class="t" style="left:29px;top:216.02px;font-size:8.18px;transform:scaleX(0.915);transform-origin:0 50%;color:#4a4a4a;">Railings</div>
<div class="b" style="left:21px;top:232.385px;width:6px;height:1px;background:#e0e0e0;"></div>
<svg class="b" style="left:15px;top:228.885px;" width="7" height="7" viewBox="0 0 7 7"><rect x=".5" y=".5" width="6" height="6" fill="#fff" stroke="#cfcfcf" stroke-width="1"/><path d="M1.8 3.5h3.4" stroke="#999" stroke-width=".9"/><path d="M3.5 1.8v3.4" stroke="#999" stroke-width=".9"/></svg>
<div class="t" style="left:29px;top:227.69px;font-size:8.18px;transform:scaleX(0.915);transform-origin:0 50%;color:#4a4a4a;">Ramps</div>
<div class="b" style="left:21px;top:244.05px;width:6px;height:1px;background:#e0e0e0;"></div>
<svg class="b" style="left:15px;top:240.55px;" width="7" height="7" viewBox="0 0 7 7"><rect x=".5" y=".5" width="6" height="6" fill="#fff" stroke="#cfcfcf" stroke-width="1"/><path d="M1.8 3.5h3.4" stroke="#999" stroke-width=".9"/><path d="M3.5 1.8v3.4" stroke="#999" stroke-width=".9"/></svg>
<div class="t" style="left:29px;top:239.35px;font-size:8.18px;transform:scaleX(0.915);transform-origin:0 50%;color:#4a4a4a;">Roofs</div>
<div class="b" style="left:21px;top:255.715px;width:6px;height:1px;background:#e0e0e0;"></div>
<svg class="b" style="left:15px;top:252.215px;" width="7" height="7" viewBox="0 0 7 7"><rect x=".5" y=".5" width="6" height="6" fill="#fff" stroke="#cfcfcf" stroke-width="1"/><path d="M1.8 3.5h3.4" stroke="#999" stroke-width=".9"/><path d="M3.5 1.8v3.4" stroke="#999" stroke-width=".9"/></svg>
<div class="t" style="left:29px;top:251.02px;font-size:8.18px;transform:scaleX(0.915);transform-origin:0 50%;color:#4a4a4a;">Stairs</div>
<div class="b" style="left:21px;top:267.38px;width:6px;height:1px;background:#e0e0e0;"></div>
<svg class="b" style="left:15px;top:263.88px;" width="7" height="7" viewBox="0 0 7 7"><rect x=".5" y=".5" width="6" height="6" fill="#fff" stroke="#cfcfcf" stroke-width="1"/><path d="M1.8 3.5h3.4" stroke="#999" stroke-width=".9"/><path d="M3.5 1.8v3.4" stroke="#999" stroke-width=".9"/></svg>
<div class="t" style="left:29px;top:262.68px;font-size:8.18px;transform:scaleX(0.915);transform-origin:0 50%;color:#4a4a4a;">Structural Columns</div>
<div class="b" style="left:21px;top:279.04499999999996px;width:6px;height:1px;background:#e0e0e0;"></div>
<svg class="b" style="left:15px;top:275.54499999999996px;" width="7" height="7" viewBox="0 0 7 7"><rect x=".5" y=".5" width="6" height="6" fill="#fff" stroke="#cfcfcf" stroke-width="1"/><path d="M1.8 3.5h3.4" stroke="#999" stroke-width=".9"/><path d="M3.5 1.8v3.4" stroke="#999" stroke-width=".9"/></svg>
<div class="t" style="left:29px;top:274.34px;font-size:8.18px;transform:scaleX(0.915);transform-origin:0 50%;color:#4a4a4a;">Structural Foundations</div>
<div class="b" style="left:21px;top:290.71000000000004px;width:6px;height:1px;background:#e0e0e0;"></div>
<svg class="b" style="left:15px;top:287.21000000000004px;" width="7" height="7" viewBox="0 0 7 7"><rect x=".5" y=".5" width="6" height="6" fill="#fff" stroke="#cfcfcf" stroke-width="1"/><path d="M1.8 3.5h3.4" stroke="#999" stroke-width=".9"/><path d="M3.5 1.8v3.4" stroke="#999" stroke-width=".9"/></svg>
<div class="t" style="left:29px;top:286.01px;font-size:8.18px;transform:scaleX(0.915);transform-origin:0 50%;color:#4a4a4a;">Structural Framing</div>
<div class="b" style="left:21px;top:302.375px;width:6px;height:1px;background:#e0e0e0;"></div>
<svg class="b" style="left:15px;top:298.875px;" width="7" height="7" viewBox="0 0 7 7"><rect x=".5" y=".5" width="6" height="6" fill="#fff" stroke="#cfcfcf" stroke-width="1"/><path d="M1.8 3.5h3.4" stroke="#999" stroke-width=".9"/><path d="M3.5 1.8v3.4" stroke="#999" stroke-width=".9"/></svg>
<div class="t" style="left:29px;top:297.68px;font-size:8.18px;transform:scaleX(0.915);transform-origin:0 50%;color:#4a4a4a;">Walls</div>
<div class="b" style="left:21px;top:314.03999999999996px;width:6px;height:1px;background:#e0e0e0;"></div>
<svg class="b" style="left:15px;top:310.53999999999996px;" width="7" height="7" viewBox="0 0 7 7"><rect x=".5" y=".5" width="6" height="6" fill="#fff" stroke="#cfcfcf" stroke-width="1"/><path d="M1.8 3.5h3.4" stroke="#999" stroke-width=".9"/></svg>
<div class="t" style="left:29px;top:309.34px;font-size:8.18px;transform:scaleX(0.915);transform-origin:0 50%;color:#4a4a4a;">Windows</div>
<div class="b" style="left:31px;top:317.03999999999996px;width:1px;height:93px;background:#e0e0e0;"></div>
<div class="b" style="left:34px;top:325.705px;width:6px;height:1px;background:#e0e0e0;"></div>
<svg class="b" style="left:28px;top:322.205px;" width="7" height="7" viewBox="0 0 7 7"><rect x=".5" y=".5" width="6" height="6" fill="#fff" stroke="#cfcfcf" stroke-width="1"/><path d="M1.8 3.5h3.4" stroke="#999" stroke-width=".9"/><path d="M3.5 1.8v3.4" stroke="#999" stroke-width=".9"/></svg>
<div class="t" style="left:41.5px;top:321.00px;font-size:8.18px;transform:scaleX(0.915);transform-origin:0 50%;color:#4a4a4a;">M_Fixed</div>
<div class="b" style="left:34px;top:337.37px;width:6px;height:1px;background:#e0e0e0;"></div>
<svg class="b" style="left:28px;top:333.87px;" width="7" height="7" viewBox="0 0 7 7"><rect x=".5" y=".5" width="6" height="6" fill="#fff" stroke="#cfcfcf" stroke-width="1"/><path d="M1.8 3.5h3.4" stroke="#999" stroke-width=".9"/></svg>
<div class="t" style="left:41.5px;top:332.67px;font-size:8.18px;transform:scaleX(0.915);transform-origin:0 50%;color:#4a4a4a;">M_Window-Casement-Double</div>
<div class="b" style="left:44px;top:340.37px;width:1px;height:58px;background:#e0e0e0;"></div>
<div class="b" style="left:44px;top:349.03499999999997px;width:8px;height:1px;background:#e0e0e0;"></div>
<div class="t" style="left:53.5px;top:344.33px;font-size:8.18px;transform:scaleX(0.915);transform-origin:0 50%;color:#4a4a4a;">850 x 900mm</div>
<div class="b" style="left:44px;top:360.7px;width:8px;height:1px;background:#e0e0e0;"></div>
<div class="b" style="left:52px;top:355.2px;width:48px;height:11px;background:#f2f2f2;border:1px solid #e2e2e2;"></div>
<div class="t" style="left:53.5px;top:356.00px;font-size:8.18px;transform:scaleX(0.915);transform-origin:0 50%;color:#4a4a4a;">900x1000mm</div>
<div class="b" style="left:44px;top:372.365px;width:8px;height:1px;background:#e0e0e0;"></div>
<div class="t" style="left:53.5px;top:367.67px;font-size:8.18px;transform:scaleX(0.915);transform-origin:0 50%;color:#4a4a4a;">1050 x 1350mm</div>
<div class="b" style="left:44px;top:384.03px;width:8px;height:1px;background:#e0e0e0;"></div>
<div class="t" style="left:53.5px;top:379.33px;font-size:8.18px;transform:scaleX(0.915);transform-origin:0 50%;color:#4a4a4a;">1200 x 1500mm</div>
<div class="b" style="left:44px;top:395.69499999999994px;width:8px;height:1px;background:#e0e0e0;"></div>
<div class="t" style="left:53.5px;top:390.99px;font-size:8.18px;transform:scaleX(0.915);transform-origin:0 50%;color:#4a4a4a;">1400 x 1800mm</div>
<div class="b" style="left:34px;top:407.36px;width:6px;height:1px;background:#e0e0e0;"></div>
<svg class="b" style="left:28px;top:403.86px;" width="7" height="7" viewBox="0 0 7 7"><rect x=".5" y=".5" width="6" height="6" fill="#fff" stroke="#cfcfcf" stroke-width="1"/><path d="M1.8 3.5h3.4" stroke="#999" stroke-width=".9"/></svg>
<div class="t" style="left:41.5px;top:402.66px;font-size:8.18px;transform:scaleX(0.915);transform-origin:0 50%;color:#4a4a4a;">M_Window-Double-Hung</div>
<svg class="b" style="left:3px;top:415.525px;" width="7" height="7" viewBox="0 0 7 7"><rect x=".5" y=".5" width="6" height="6" fill="#fff" stroke="#cfcfcf" stroke-width="1"/><path d="M1.8 3.5h3.4" stroke="#999" stroke-width=".9"/><path d="M3.5 1.8v3.4" stroke="#999" stroke-width=".9"/></svg>
<svg class="b" style="left:13px;top:414.025px;" width="11" height="10" viewBox="0 0 11 10"><path d="M3 1H1v8h2M8 1h2v8H8" fill="none" stroke="#555" stroke-width="1.3"/><path d="M3.5 3l4 4M3.5 7V3h4" fill="none" stroke="#4a6fa0" stroke-width="1"/></svg>
<div class="t" style="left:26.5px;top:414.32px;font-size:8.18px;transform:scaleX(0.915);transform-origin:0 50%;color:#4a4a4a;">Groups</div>
<svg class="b" style="left:13px;top:426.68999999999994px;" width="12" height="8" viewBox="0 0 12 8"><rect x="1" y="1.5" width="10" height="5" rx="2" fill="#c9b048"/></svg>
<div class="t" style="left:26.5px;top:425.99px;font-size:8.18px;transform:scaleX(0.915);transform-origin:0 50%;color:#4a4a4a;">Revit Links</div>
<div class="b" style="left:0px;top:434.8px;width:800px;height:16.2px;background:#c9c9c9;"></div>
<div class="b" style="left:0px;top:448.5px;width:800px;height:2.5px;background:#dadada;"></div>
<div class="t" style="left:2px;top:436.80px;font-size:7.68px;transform:scaleX(0.915);transform-origin:0 50%;color:#3a3a3a;">Click to select, TAB for alternates, CTRL adds, SHIFT unselects.</div>
<div class="b" style="left:169.5px;top:108.5px;width:494px;height:326px;background:#ffffff;"></div>
<div class="b" style="left:169.5px;top:108.5px;width:494px;height:12.5px;background:#d2d2d2;"></div>
<div class="b" style="left:169.5px;top:108.5px;width:79px;height:14px;background:#ffffff;"></div>
<svg class="b" style="left:171px;top:110px;" width="10" height="10" viewBox="0 0 10 10"><path d="M1 4.5L5 1.5l4 3V9H1z" fill="#ddd" stroke="#444" stroke-width="1.1"/><path d="M1 4.5L5 6.5l4-2M5 6.5V9" fill="none" stroke="#444" stroke-width=".9"/></svg>
<div class="t" style="left:185.5px;top:110.80px;font-size:8.18px;transform:scaleX(0.915);transform-origin:0 50%;color:#4a4a4a;">{3D}</div>
<svg class="b" style="left:239px;top:112px;" width="7" height="7" viewBox="0 0 7 7"><path d="M.8 .8l5.4 5.4M6.2 .8L.8 6.2" stroke="#333" stroke-width="1.3"/></svg>
<div class="b" style="left:248.5px;top:108.5px;width:48px;height:12.5px;background:#d6d6d6;"></div>
<svg class="b" style="left:254px;top:110px;" width="9" height="10" viewBox="0 0 9 10"><rect x=".5" y=".5" width="8" height="9" fill="#f2f2f2" stroke="#999"/><path d="M2 3h5" stroke="#bbb"/></svg>
<div class="t" style="left:266px;top:110.80px;font-size:8.18px;transform:scaleX(0.915);transform-origin:0 50%;color:#666;">Level 1</div>
<svg class="b" style="left:653px;top:111.5px;" width="8" height="8" viewBox="0 0 8 8"><path d="M1 1.5h6" stroke="#333" stroke-width="1"/><path d="M1 4h6L4 7z" fill="#333"/></svg>
<div class="b" style="left:169.5px;top:121px;width:481px;height:1.5px;background:#f4f4f4;"></div>
<div class="b" style="left:650px;top:122.5px;width:13px;height:300px;background:#f0f0f0;"></div>
<div class="b" style="left:651.5px;top:267px;width:9px;height:10px;background:#cdcdcd;"></div>
<svg class="b" style="left:653px;top:126px;" width="7" height="5" viewBox="0 0 7 5"><path d="M.8 4L3.5 1.2 6.2 4" fill="none" stroke="#555" stroke-width="1"/></svg>
<svg class="b" style="left:652px;top:414px;" width="7" height="5" viewBox="0 0 7 5"><path d="M.8 1L3.5 3.8 6.2 1" fill="none" stroke="#555" stroke-width="1"/></svg>
<div class="b" style="left:169.5px;top:422.5px;width:494px;height:12px;background:#f6f6f6;"></div>
<div class="t" style="left:185px;top:423.60px;font-size:7.63px;transform:scaleX(0.915);transform-origin:0 50%;color:#444;">1 : 100</div>
<svg class="b" style="left:220px;top:423px;" width="10" height="10" viewBox="0 0 10 10"><rect x="1" y="2" width="8" height="6" fill="#888"/><path d="M1 4h8M1 6h8" stroke="#ddd" stroke-width=".6"/></svg>
<svg class="b" style="left:232px;top:423px;" width="10" height="10" viewBox="0 0 10 10"><path d="M1 4l3-2h6v5l-3 2H1z" fill="#4aa0c8" stroke="#357" stroke-width=".7"/></svg>
<svg class="b" style="left:246px;top:423px;" width="10" height="10" viewBox="0 0 10 10"><circle cx="4" cy="3" r="2" fill="#999"/><path d="M2 9V6h4v3" fill="#888"/><path d="M6 6l3 3M9 6L6 9" stroke="#d33" stroke-width="1.1"/></svg>
<svg class="b" style="left:261px;top:423px;" width="10" height="10" viewBox="0 0 10 10"><rect x="1" y="3" width="5" height="6" fill="#4a7cb8"/><rect x="5" y="2" width="4" height="7" fill="#c33"/></svg>
<svg class="b" style="left:275px;top:423px;" width="10" height="10" viewBox="0 0 10 10"><circle cx="3" cy="6" r="2.3" fill="none" stroke="#4a7cb8" stroke-width="1.3"/><circle cx="7" cy="6" r="2.3" fill="none" stroke="#4a7cb8" stroke-width="1.3"/></svg>
<svg class="b" style="left:286px;top:423px;" width="10" height="10" viewBox="0 0 10 10"><circle cx="5" cy="5" r="4" fill="none" stroke="#666" stroke-width="1"/><rect x="3" y="3" width="4" height="4" fill="#999"/></svg>
<svg class="b" style="left:299px;top:423px;" width="10" height="10" viewBox="0 0 10 10"><path d="M1 6a3 3 0 0 1 6 0M5 4l3 3" fill="none" stroke="#777" stroke-width="1"/></svg>
<svg class="b" style="left:312px;top:423px;" width="10" height="10" viewBox="0 0 10 10"><path d="M4 2a2 2 0 0 1 2 2c0 2-2 3-2 5" fill="none" stroke="#888" stroke-width="1"/></svg>
<svg class="b" style="left:326px;top:423px;" width="10" height="10" viewBox="0 0 10 10"><rect x="1" y="2" width="8" height="7" fill="none" stroke="#555" stroke-width="1"/><rect x="4" y="4" width="4" height="4" fill="#777"/></svg>
<svg class="b" style="left:340px;top:423px;" width="10" height="10" viewBox="0 0 10 10"><circle cx="5" cy="5" r="4" fill="#777"/><path d="M2 5h6M5 2v6" stroke="#ddd" stroke-width=".8"/></svg>
<svg class="b" style="left:352px;top:423px;" width="10" height="10" viewBox="0 0 10 10"><rect x="1" y="2" width="8" height="7" fill="none" stroke="#555" stroke-width="1"/><path d="M6 1l3 3" stroke="#555"/></svg>
<svg class="b" style="left:365px;top:425px;" width="5" height="7" viewBox="0 0 5 7"><path d="M4 1L1.3 3.5 4 6" fill="none" stroke="#444" stroke-width="1.1"/></svg>
<div class="b" style="left:500px;top:423px;width:13px;height:10px;background:#d4d4d4;"></div>
<svg class="b" style="left:641px;top:425px;" width="5" height="7" viewBox="0 0 5 7"><path d="M1 1l2.7 2.5L1 6" fill="none" stroke="#444" stroke-width="1.1"/></svg>
<svg class="b" style="left:0;top:0" width="800" height="451" viewBox="0 0 800 451"><defs><linearGradient id="dg1" x1="0" x2="1" y1="0" y2="0"><stop offset="0" stop-color="#d3864c"/><stop offset=".4" stop-color="#dc8f52"/><stop offset=".75" stop-color="#d98c50"/><stop offset="1" stop-color="#cf844c"/></linearGradient><linearGradient id="dg2" x1="0" x2="1" y1="0" y2="0"><stop offset="0" stop-color="#c58358"/><stop offset=".2" stop-color="#cb895c"/><stop offset=".4" stop-color="#c68457"/><stop offset=".6" stop-color="#cc8a5d"/><stop offset=".8" stop-color="#c78558"/><stop offset="1" stop-color="#c08054"/></linearGradient></defs><polygon points="170,122.5 650,122.5 650,288.5 170,351" fill="#6c6c66"/><polygon points="217.3,216.5 260,211 260,338.6 254.5,338.9 254.5,217 223.3,220.3 223.3,343.7 217.3,344.3" fill="#9e6240" stroke="#6e4630" stroke-width=".5"/><polygon points="223.3,220.3 250.6,216.9 250.6,336.2 223.3,339.6" fill="url(#dg1)"/><polygon points="223.3,339.6 250.6,336.2 254.5,338.3 254.5,346 223.3,350" fill="#fdfdfd"/><polygon points="250.6,216.9 255,216.4 255,338.3 250.6,338.7" fill="#3a2a22"/><polygon points="255,216.4 256.2,216.2 256.2,338.2 255,338.3" fill="#7a4a30"/><polygon points="217.3,216.5 260,211 260,212 217.3,217.5" fill="#6e4630" opacity=".7"/><polygon points="316,207.7 376,201.1 376,324.3 316,331" fill="#a86c48" stroke="#7a4e34" stroke-width=".6"/><polygon points="320.5,212.6 371.5,207 371.5,324.8 320.5,330.5" fill="url(#dg2)"/><polygon points="370.5,207.1 372,207 372,324.8 370.5,325" fill="#5a3a28"/><polygon points="316,207.7 376,201.1 376,202.3 316,208.9" fill="#6e4630" opacity=".8"/><g transform="translate(445.2,206.5) matrix(1,-0.104,0,1,0,0)"><rect x="0" y="0" width="52.2" height="56.5" fill="#b5825c" stroke="#80553a" stroke-width=".6"/><rect x="2.6100000000000003" y="2.5425" width="46.980000000000004" height="48.8725" fill="#6e5848"/><rect x="43.326" y="3.3899999999999997" width="5.742" height="47.46" fill="#a37352"/><rect x="43.326" y="3.3899999999999997" width="1.044" height="47.46" fill="#7a563e"/><rect x="3.132" y="3.1075" width="39.672000000000004" height="46.0475" fill="#b5825c"/><rect x="3.915" y="4.8025" width="14.094" height="40.3975" fill="#e2dedb" stroke="#3b3531" stroke-width="1"/><rect x="9.951" y="4.8025" width="1.5" height="40.3975" fill="#3b3531"/><rect x="3.915" y="24.675" width="14.094" height="1.5" fill="#3b3531"/><rect x="24.273000000000003" y="4.8025" width="17.748" height="40.3975" fill="#e2dedb" stroke="#3b3531" stroke-width="1"/><rect x="32.136" y="4.8025" width="1.5" height="40.3975" fill="#3b3531"/><rect x="24.273000000000003" y="24.675" width="17.748" height="1.5" fill="#3b3531"/><rect x="18.792" y="3.9550000000000005" width=".7" height="44.07" fill="#7a563e"/><rect x="23.229000000000003" y="3.9550000000000005" width=".7" height="44.07" fill="#7a563e"/><rect x="3.132" y="48.589999999999996" width="45.936" height="1.9775000000000003" fill="#6e4e38"/></g><g transform="translate(524.8,196) matrix(1,-0.108,0,1,0,0)"><rect x="0" y="0" width="59.3" height="58.5" fill="#b5825c" stroke="#80553a" stroke-width=".6"/><rect x="2.965" y="2.6325" width="53.37" height="50.6025" fill="#6e5848"/><rect x="49.218999999999994" y="3.51" width="6.523" height="49.14" fill="#a37352"/><rect x="49.218999999999994" y="3.51" width="1.186" height="49.14" fill="#7a563e"/><rect x="3.558" y="3.2175" width="45.068" height="47.677499999999995" fill="#b5825c"/><rect x="4.4475" y="4.9725" width="16.010999999999996" height="41.8275" fill="#e2dedb" stroke="#3b3531" stroke-width="1"/><rect x="11.4065" y="4.9725" width="1.5" height="41.8275" fill="#3b3531"/><rect x="4.4475" y="25.575" width="16.010999999999996" height="1.5" fill="#3b3531"/><rect x="27.5745" y="4.9725" width="20.162" height="41.8275" fill="#e2dedb" stroke="#3b3531" stroke-width="1"/><rect x="36.609" y="4.9725" width="1.5" height="41.8275" fill="#3b3531"/><rect x="27.5745" y="25.575" width="20.162" height="1.5" fill="#3b3531"/><rect x="21.348" y="4.095000000000001" width=".7" height="45.63" fill="#7a563e"/><rect x="26.3885" y="4.095000000000001" width=".7" height="45.63" fill="#7a563e"/><rect x="3.558" y="50.31" width="52.184" height="2.0475000000000003" fill="#6e4e38"/></g><ellipse cx="612" cy="174.5" rx="26" ry="8" fill="#5a5a56" stroke="#a6a6a2" stroke-width="2"/><polygon points="599,151 605,148.5 626,149.5 626,170 620,174.5 599,172" fill="#a0a09c"/><polygon points="599,151 605,148.5 626,149.5 620,152" fill="#b4b4b0"/><polygon points="620,152 626,149.5 626,170 620,174.5" fill="#90908c"/><rect x="605" y="160" width="11" height="6" fill="#8a8a86"/><rect x="629.5" y="195.5" width="19" height="68" fill="#8c8c88" stroke="#a4a4a0" stroke-width=".8"/><circle cx="639" cy="212" r="5" fill="#9a9a96" stroke="#c8c8c4" stroke-width="1.6"/><circle cx="639" cy="212" r="2" fill="#b8b8b4"/><circle cx="639" cy="236" r="1.5" fill="#bcbcb8"/><circle cx="640" cy="242" r="1.5" fill="#e0e0dc"/><circle cx="639" cy="251" r="1" fill="#bcbcb8"/></svg>
<div class="b" style="left:663px;top:108.5px;width:137px;height:326px;background:#f0f0f0;"></div>
<div class="b" style="left:663px;top:108.5px;width:1px;height:326px;background:#d4d4d4;"></div>
<div class="t" style="left:666px;top:110.80px;font-size:8.18px;transform:scaleX(0.915);transform-origin:0 50%;color:#606060;">Properties</div>
<svg class="b" style="left:790px;top:111.5px;" width="8" height="8" viewBox="0 0 8 8"><path d="M1 1l6 6M7 1L1 7" stroke="#222" stroke-width="1.4"/></svg>
<div class="b" style="left:664px;top:121px;width:136px;height:43px;background:#f5f5f5;"></div>
<div class="b" style="left:707px;top:121px;width:1px;height:43px;background:#e2e2e2;"></div>
<svg class="b" style="left:676px;top:133px;" width="22" height="20" viewBox="0 0 22 20"><path d="M3 9L11 3l8 6v9l-8 1.5-8-2.5z" fill="#f4f4f4" stroke="#555" stroke-width="1.1"/><path d="M3 9l8-6 8 6-8 3z" fill="#c8c8c8" stroke="#555" stroke-width="1"/><path d="M11 12v7.5" stroke="#555"/><rect x="6" y="12" width="3" height="5" fill="#555"/></svg>
<div class="t" style="left:710px;top:139.30px;font-size:8.18px;transform:scaleX(0.915);transform-origin:0 50%;color:#505050;">3D View</div>
<div class="t" style="left:793px;top:137.50px;font-size:6px;color:#444;">▾</div>
<div class="b" style="left:665px;top:165.5px;width:90px;height:13px;background:#dadada;"></div>
<div class="t" style="left:667px;top:167.30px;font-size:8.18px;transform:scaleX(0.915);transform-origin:0 50%;color:#4a4a4a;">3D View: {3D}</div>
<div class="t" style="left:746px;top:166.00px;font-size:8px;color:#555;">⌄</div>
<svg class="b" style="left:757px;top:168px;" width="7" height="8" viewBox="0 0 7 8"><rect x=".5" y=".5" width="6" height="7" fill="#fff" stroke="#555" stroke-width=".9"/><path d="M1 3.5h5M3.5 1v6" stroke="#555" stroke-width=".7"/></svg>
<div class="t" style="left:765.5px;top:167.30px;font-size:8.18px;transform:scaleX(0.915);transform-origin:0 50%;color:#4a4a4a;">Edit Type</div>
<div class="b" style="left:788px;top:180px;width:12px;height:254px;background:#f0f0f0;"></div>
<div class="b" style="left:790px;top:191px;width:9.5px;height:134px;background:#cdcdcd;"></div>
<svg class="b" style="left:791px;top:183px;" width="7" height="5" viewBox="0 0 7 5"><path d="M.8 4L3.5 1.2 6.2 4" fill="none" stroke="#444" stroke-width="1"/></svg>
<svg class="b" style="left:791px;top:411px;" width="7" height="5" viewBox="0 0 7 5"><path d="M.8 1L3.5 3.8 6.2 1" fill="none" stroke="#444" stroke-width="1"/></svg>
<div class="b" style="left:664px;top:180.0px;width:124px;height:12.45px;background:#d9d9d9;"></div>
<div class="t" style="left:666px;top:181.53px;font-size:8.18px;transform:scaleX(0.915);transform-origin:0 50%;color:#4a4a4a;">Graphics</div>
<div class="t" style="left:782px;top:178.72px;font-size:5px;color:#555;">▴</div>
<div class="b" style="left:664px;top:192.45px;width:124px;height:12.45px;background:#ffffff;"></div>
<div class="b" style="left:664px;top:203.89999999999998px;width:124px;height:1px;background:#e6e6e6;"></div>
<div class="b" style="left:725.5px;top:192.45px;width:1px;height:12.45px;background:#e6e6e6;"></div>
<div class="t" style="left:669px;top:193.97px;font-size:8.18px;transform:scaleX(0.915);transform-origin:0 50%;color:#333;">View&nbsp;Scale</div>
<div class="b" style="left:726px;top:192.45px;width:62px;height:12.45px;background:#ffffff;border:1px solid #8a8a8a;"></div>
<div class="t" style="left:730px;top:193.97px;font-size:8.18px;transform:scaleX(0.915);transform-origin:0 50%;color:#4a4a4a;">1 : 100</div>
<div class="b" style="left:664px;top:204.89999999999998px;width:124px;height:12.45px;background:#ffffff;"></div>
<div class="b" style="left:664px;top:216.34999999999997px;width:124px;height:1px;background:#e6e6e6;"></div>
<div class="b" style="left:725.5px;top:204.89999999999998px;width:1px;height:12.45px;background:#e6e6e6;"></div>
<div class="t" style="left:669px;top:206.42px;font-size:8.18px;transform:scaleX(0.915);transform-origin:0 50%;color:#aaa;">Scale&nbsp;Value&nbsp;&nbsp;&nbsp;&nbsp;1:</div>
<div class="t" style="left:728px;top:206.42px;font-size:8.18px;transform:scaleX(0.915);transform-origin:0 50%;color:#aaa;">100</div>
<div class="b" style="left:664px;top:217.34999999999997px;width:124px;height:12.45px;background:#ffffff;"></div>
<div class="b" style="left:664px;top:228.79999999999995px;width:124px;height:1px;background:#e6e6e6;"></div>
<div class="b" style="left:725.5px;top:217.34999999999997px;width:1px;height:12.45px;background:#e6e6e6;"></div>
<div class="t" style="left:669px;top:218.87px;font-size:8.18px;transform:scaleX(0.915);transform-origin:0 50%;color:#333;">Detail&nbsp;Level</div>
<div class="t" style="left:728px;top:218.87px;font-size:8.18px;transform:scaleX(0.915);transform-origin:0 50%;color:#333;">Fine</div>
<div class="b" style="left:664px;top:229.79999999999995px;width:124px;height:12.45px;background:#ffffff;"></div>
<div class="b" style="left:664px;top:241.24999999999994px;width:124px;height:1px;background:#e6e6e6;"></div>
<div class="b" style="left:725.5px;top:229.79999999999995px;width:1px;height:12.45px;background:#e6e6e6;"></div>
<div class="t" style="left:669px;top:231.32px;font-size:8.18px;transform:scaleX(0.915);transform-origin:0 50%;color:#333;">Visibility/Graph...</div>
<div class="b" style="left:727px;top:230.29999999999995px;width:60.5px;height:10.95px;background:#dcdcdc;border:1px solid #c8c8c8;"></div>
<div class="t" style="left:697px;width:120px;text-align:center;top:231.32px;font-size:8.18px;transform:scaleX(0.915);color:#4a4a4a;">Edit...</div>
<div class="b" style="left:664px;top:242.24999999999994px;width:124px;height:12.45px;background:#ffffff;"></div>
<div class="b" style="left:664px;top:253.69999999999993px;width:124px;height:1px;background:#e6e6e6;"></div>
<div class="b" style="left:725.5px;top:242.24999999999994px;width:1px;height:12.45px;background:#e6e6e6;"></div>
<div class="t" style="left:669px;top:243.77px;font-size:8.18px;transform:scaleX(0.915);transform-origin:0 50%;color:#333;">Graphic&nbsp;Display...</div>
<div class="b" style="left:727px;top:242.74999999999994px;width:60.5px;height:10.95px;background:#dcdcdc;border:1px solid #c8c8c8;"></div>
<div class="t" style="left:697px;width:120px;text-align:center;top:243.77px;font-size:8.18px;transform:scaleX(0.915);color:#4a4a4a;">Edit...</div>
<div class="b" style="left:664px;top:254.69999999999993px;width:124px;height:12.45px;background:#ffffff;"></div>
<div class="b" style="left:664px;top:266.1499999999999px;width:124px;height:1px;background:#e6e6e6;"></div>
<div class="b" style="left:725.5px;top:254.69999999999993px;width:1px;height:12.45px;background:#e6e6e6;"></div>
<div class="t" style="left:669px;top:256.22px;font-size:8.18px;transform:scaleX(0.915);transform-origin:0 50%;color:#333;">Discipline</div>
<div class="t" style="left:728px;top:256.22px;font-size:8.18px;transform:scaleX(0.915);transform-origin:0 50%;color:#333;">Architectural</div>
<div class="b" style="left:664px;top:267.1499999999999px;width:124px;height:12.45px;background:#ffffff;"></div>
<div class="b" style="left:664px;top:278.5999999999999px;width:124px;height:1px;background:#e6e6e6;"></div>
<div class="b" style="left:725.5px;top:267.1499999999999px;width:1px;height:12.45px;background:#e6e6e6;"></div>
<div class="t" style="left:669px;top:268.67px;font-size:8.18px;transform:scaleX(0.915);transform-origin:0 50%;color:#333;">Show&nbsp;Hidden&nbsp;L...</div>
<div class="t" style="left:728px;top:268.67px;font-size:8.18px;transform:scaleX(0.915);transform-origin:0 50%;color:#333;">By Discipline</div>
<div class="b" style="left:664px;top:279.5999999999999px;width:124px;height:12.45px;background:#ffffff;"></div>
<div class="b" style="left:664px;top:291.0499999999999px;width:124px;height:1px;background:#e6e6e6;"></div>
<div class="b" style="left:725.5px;top:279.5999999999999px;width:1px;height:12.45px;background:#e6e6e6;"></div>
<div class="t" style="left:669px;top:281.12px;font-size:8.18px;transform:scaleX(0.915);transform-origin:0 50%;color:#333;">Show&nbsp;Grids</div>
<div class="b" style="left:727px;top:280.0999999999999px;width:60.5px;height:10.95px;background:#dcdcdc;border:1px solid #c8c8c8;"></div>
<div class="t" style="left:697px;width:120px;text-align:center;top:281.12px;font-size:8.18px;transform:scaleX(0.915);color:#4a4a4a;">Edit...</div>
<div class="b" style="left:664px;top:292.0499999999999px;width:124px;height:12.45px;background:#d9d9d9;"></div>
<div class="t" style="left:666px;top:293.57px;font-size:8.18px;transform:scaleX(0.915);transform-origin:0 50%;color:#4a4a4a;">Extents</div>
<div class="t" style="left:782px;top:290.77px;font-size:5px;color:#555;">▴</div>
<div class="b" style="left:664px;top:304.4999999999999px;width:124px;height:12.45px;background:#ffffff;"></div>
<div class="b" style="left:664px;top:315.9499999999999px;width:124px;height:1px;background:#e6e6e6;"></div>
<div class="b" style="left:725.5px;top:304.4999999999999px;width:1px;height:12.45px;background:#e6e6e6;"></div>
<div class="t" style="left:669px;top:306.02px;font-size:8.18px;transform:scaleX(0.915);transform-origin:0 50%;color:#333;">Crop&nbsp;View</div>
<div class="b" style="left:727px;top:306.2999999999999px;width:8.5px;height:8.5px;background:#ffffff;border:1px solid #8a8a8a;"></div>
<div class="b" style="left:664px;top:316.9499999999999px;width:124px;height:12.45px;background:#ffffff;"></div>
<div class="b" style="left:664px;top:328.39999999999986px;width:124px;height:1px;background:#e6e6e6;"></div>
<div class="b" style="left:725.5px;top:316.9499999999999px;width:1px;height:12.45px;background:#e6e6e6;"></div>
<div class="t" style="left:669px;top:318.47px;font-size:8.18px;transform:scaleX(0.915);transform-origin:0 50%;color:#333;">Crop&nbsp;Region&nbsp;Vi...</div>
<div class="b" style="left:727px;top:318.7499999999999px;width:8.5px;height:8.5px;background:#ffffff;border:1px solid #8a8a8a;"></div>
<div class="b" style="left:664px;top:329.39999999999986px;width:124px;height:12.45px;background:#ffffff;"></div>
<div class="b" style="left:664px;top:340.84999999999985px;width:124px;height:1px;background:#e6e6e6;"></div>
<div class="b" style="left:725.5px;top:329.39999999999986px;width:1px;height:12.45px;background:#e6e6e6;"></div>
<div class="t" style="left:669px;top:330.92px;font-size:8.18px;transform:scaleX(0.915);transform-origin:0 50%;color:#333;">Annotation&nbsp;Crop</div>
<div class="b" style="left:727px;top:331.1999999999999px;width:8.5px;height:8.5px;background:#ffffff;border:1px solid #8a8a8a;"></div>
<div class="b" style="left:664px;top:341.84999999999985px;width:124px;height:12.45px;background:#ffffff;"></div>
<div class="b" style="left:664px;top:353.29999999999984px;width:124px;height:1px;background:#e6e6e6;"></div>
<div class="b" style="left:725.5px;top:341.84999999999985px;width:1px;height:12.45px;background:#e6e6e6;"></div>
<div class="t" style="left:669px;top:343.37px;font-size:8.18px;transform:scaleX(0.915);transform-origin:0 50%;color:#333;">Far&nbsp;Clip&nbsp;Active</div>
<div class="b" style="left:727px;top:343.64999999999986px;width:8.5px;height:8.5px;background:#ffffff;border:1px solid #8a8a8a;"></div>
<div class="b" style="left:664px;top:354.29999999999984px;width:124px;height:12.45px;background:#ffffff;"></div>
<div class="b" style="left:664px;top:365.74999999999983px;width:124px;height:1px;background:#e6e6e6;"></div>
<div class="b" style="left:725.5px;top:354.29999999999984px;width:1px;height:12.45px;background:#e6e6e6;"></div>
<div class="t" style="left:669px;top:355.82px;font-size:8.18px;transform:scaleX(0.915);transform-origin:0 50%;color:#aaa;">Far&nbsp;Clip&nbsp;Offset</div>
<div class="t" style="left:728px;top:355.82px;font-size:8.18px;transform:scaleX(0.915);transform-origin:0 50%;color:#aaa;">304800.0</div>
<div class="b" style="left:664px;top:366.74999999999983px;width:124px;height:12.45px;background:#ffffff;"></div>
<div class="b" style="left:664px;top:378.1999999999998px;width:124px;height:1px;background:#e6e6e6;"></div>
<div class="b" style="left:725.5px;top:366.74999999999983px;width:1px;height:12.45px;background:#e6e6e6;"></div>
<div class="t" style="left:669px;top:368.27px;font-size:8.18px;transform:scaleX(0.915);transform-origin:0 50%;color:#333;">Scope&nbsp;Box</div>
<div class="t" style="left:728px;top:368.27px;font-size:8.18px;transform:scaleX(0.915);transform-origin:0 50%;color:#333;">None</div>
<div class="b" style="left:664px;top:379.1999999999998px;width:124px;height:12.45px;background:#ffffff;"></div>
<div class="b" style="left:664px;top:390.6499999999998px;width:124px;height:1px;background:#e6e6e6;"></div>
<div class="b" style="left:725.5px;top:379.1999999999998px;width:1px;height:12.45px;background:#e6e6e6;"></div>
<div class="t" style="left:669px;top:380.72px;font-size:8.18px;transform:scaleX(0.915);transform-origin:0 50%;color:#333;">Section&nbsp;Box</div>
<div class="b" style="left:727px;top:380.99999999999983px;width:8.5px;height:8.5px;background:#ffffff;border:1px solid #8a8a8a;"></div>
<div class="b" style="left:664px;top:391.6499999999998px;width:124px;height:12.45px;background:#d9d9d9;"></div>
<div class="t" style="left:666px;top:393.17px;font-size:8.18px;transform:scaleX(0.915);transform-origin:0 50%;color:#4a4a4a;">Camera</div>
<div class="t" style="left:782px;top:390.37px;font-size:5px;color:#555;">▴</div>
<div class="b" style="left:664px;top:404.0999999999998px;width:124px;height:12.45px;background:#ffffff;"></div>
<div class="b" style="left:664px;top:415.5499999999998px;width:124px;height:1px;background:#e6e6e6;"></div>
<div class="b" style="left:725.5px;top:404.0999999999998px;width:1px;height:12.45px;background:#e6e6e6;"></div>
<div class="t" style="left:669px;top:405.62px;font-size:8.18px;transform:scaleX(0.915);transform-origin:0 50%;color:#333;">Rendering&nbsp;Setti...</div>
<div class="b" style="left:727px;top:404.5999999999998px;width:60.5px;height:10.95px;background:#dcdcdc;border:1px solid #c8c8c8;"></div>
<div class="t" style="left:697px;width:120px;text-align:center;top:405.62px;font-size:8.18px;transform:scaleX(0.915);color:#4a4a4a;">Edit...</div>
<div class="t" style="left:666px;top:421.30px;font-size:8.18px;transform:scaleX(0.915);transform-origin:0 50%;color:#3c8dc8;">Properties help</div>
<div class="b" style="left:752px;top:420px;width:45px;height:12.5px;background:#dadada;"></div>
<div class="t" style="left:714.5px;width:120px;text-align:center;top:421.60px;font-size:8.18px;transform:scaleX(0.915);color:#b0b0b0;">Apply</div>
<svg class="b" style="left:667px;top:437px;" width="11" height="11" viewBox="0 0 11 11"><circle cx="5.5" cy="3.5" r="2.5" fill="#f0b030"/><path d="M1 11V8c0-2 9-2 9 0v3z" fill="#e8a828"/><path d="M3 4h5" stroke="#c06a20"/></svg>
<svg class="b" style="left:684px;top:437px;" width="11" height="11" viewBox="0 0 11 11"><path d="M1 10l4-7 4 7z" fill="#6aa0d8"/><path d="M7 1l3 3M10 1L7 4" stroke="#d44" stroke-width="1.2"/><rect x="1" y="8" width="3" height="3" fill="#4a7cb8"/></svg>
<svg class="b" style="left:697px;top:437px;" width="11" height="11" viewBox="0 0 11 11"><rect x="1" y="4" width="9" height="7" fill="#d0905a"/><circle cx="3.5" cy="3" r="2" fill="#e0a060"/><circle cx="7.5" cy="3" r="2" fill="#c07040"/></svg>
<svg class="b" style="left:711px;top:437px;" width="11" height="11" viewBox="0 0 11 11"><rect x="1" y="2" width="6" height="9" fill="#5a8ac8"/><rect x="6" y="1" width="5" height="6" fill="#e05050"/><rect x="2" y="4" width="3" height="5" fill="#fff"/></svg>
<svg class="b" style="left:726px;top:437px;" width="11" height="11" viewBox="0 0 11 11"><path d="M1 1l3 3v6l5-4" fill="none" stroke="#333" stroke-width="1.2"/><circle cx="8" cy="8" r="2" fill="#777"/></svg>
<svg class="b" style="left:741px;top:437px;" width="11" height="11" viewBox="0 0 11 11"><circle cx="5.5" cy="5.5" r="3.8" fill="none" stroke="#9a9a9a" stroke-width="1.5"/></svg>
<svg class="b" style="left:755px;top:437px;" width="11" height="11" viewBox="0 0 11 11"><path d="M1 1h9L6.5 5.5V10L4.5 9V5.5z" fill="#e8e8e8" stroke="#555" stroke-width="1"/></svg>
<div class="t" style="left:765px;top:437.80px;font-size:7.63px;transform:scaleX(0.915);transform-origin:0 50%;color:#444;">:0</div>
</div></body></html>
